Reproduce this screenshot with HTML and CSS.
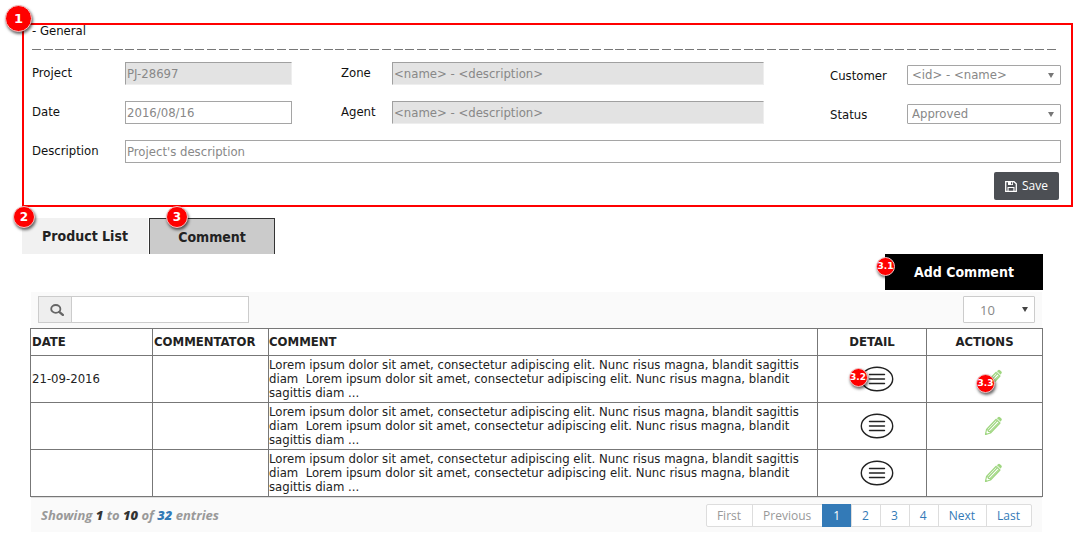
FILE: index.html
```html
<!DOCTYPE html>
<html lang="en">
<head>
<meta charset="utf-8">
<title>Project comments</title>
<link rel="stylesheet" href="styles.css">
</head>
<body>
<svg class="sprite" aria-hidden="true">
  <symbol id="pencil" viewBox="0 0 18 20">
    <g fill="none" stroke="#9fd680" stroke-width="1.2" stroke-linejoin="round">
      <path d="M1.5 18.5 2.5 13.5 12 3.5 16 7 6.5 17z"/>
      <path d="M2.5 13.5 4 14l.5 1.5 1.8.2.2 1.3M4.6 14 13 5.2M6 15.6 14.8 6.600"/>
    </g>
    <path fill="#9fd680" d="M12.500 2.800 14 1.200q1-.8 2 0l1.400 1.400q.8 1 0 1.900L16.200 6z"/>
    <path stroke="#fff" stroke-width=".8" d="m12.800 2.300 4 4"/>
    <path fill="#9fd680" d="M1 19l.6-2.600 1.800 1.900z"/>
  </symbol>
  <symbol id="lines" viewBox="0 0 34 26">
    <ellipse cx="17" cy="13" rx="15.700" ry="11.800" fill="#fff" stroke="#222" stroke-width="1.400"/>
    <path d="M9.500 8.500h15M9.500 13h15M9.500 17.500h15" stroke="#222" stroke-width="1.400" stroke-linecap="round"/>
  </symbol>
</svg>
<main class="page">
  <form class="general">
    <span class="badge badge-lg badge-general">1</span>
    <h2 class="general-title">- General</h2>
    <div class="divider"></div>
    <div class="fields">
      <label for="project">Project</label>
      <input class="field readonly" id="project" value="PJ-28697" readonly>
      <label class="label-mid" for="zone">Zone</label>
      <input class="field readonly" id="zone" value="&lt;name&gt; - &lt;description&gt;" readonly>
      <label class="label-end" for="customer">Customer</label>
      <span class="select"><select id="customer"><option>&lt;id&gt; - &lt;name&gt;</option></select></span>
      <label for="date">Date</label>
      <input class="field" id="date" value="2016/08/16">
      <label class="label-mid" for="agent">Agent</label>
      <input class="field readonly" id="agent" value="&lt;name&gt; - &lt;description&gt;" readonly>
      <label class="label-end" for="status">Status</label>
      <span class="select"><select id="status"><option>Approved</option></select></span>
      <label for="description">Description</label>
      <input class="field field-wide" id="description" value="Project's description">
    </div>
    <div class="form-actions">
      <button class="save" type="button">
        <svg width="12" height="11" viewBox="0 0 12 11" aria-hidden="true">
          <path d="M.7.700h8.300l2.300 2.200v7.400H.7z" fill="none" stroke="#fff" stroke-width="1.300"/>
          <path d="M3 .7h5v3.300H3zM2.500 6h7v4.300h-7z" fill="#fff"/>
          <path d="M6 1.300h1.200v2H6zM3.600 7h4.800v2.800H3.600z" fill="#4c4f54"/>
        </svg>
        Save
      </button>
    </div>
  </form>

  <section class="panel">
    <nav class="tabs">
      <button class="tab" type="button">Product List<span class="badge badge-md badge-products">2</span></button>
      <button class="tab tab-active" type="button">Comment<span class="badge badge-md badge-comment">3</span></button>
    </nav>
    <div class="add-row">
      <button class="add" type="button">Add Comment<span class="badge badge-sm badge-add">3.1</span></button>
    </div>
    <div class="listing">
      <div class="toolbar">
        <div class="search">
          <label class="search-icon" for="search" aria-label="Search">
            <svg width="14" height="12" viewBox="0 0 14 12" aria-hidden="true">
              <g fill="none" stroke="#666" stroke-width="1.800"><ellipse cx="5.800" cy="4.900" rx="4.600" ry="3.900"/><path d="m9.200 7.900 3.600 3" stroke-width="2.400" stroke-linecap="round"/></g>
            </svg>
          </label>
          <input class="search-input" id="search">
        </div>
        <span class="select select-count"><select aria-label="Rows per page"><option>10</option></select></span>
      </div>
      <table class="comments">
        <colgroup><col class="c-date"><col class="c-author"><col><col class="c-detail"><col class="c-actions"></colgroup>
        <thead>
          <tr><th>DATE</th><th>COMMENTATOR</th><th class="text">COMMENT</th><th class="mid">DETAIL</th><th class="mid">ACTIONS</th></tr>
        </thead>
        <tbody>
          <tr>
            <td>21-09-2016</td><td></td>
            <td class="text">Lorem ipsum dolor sit amet, consectetur adipiscing elit. Nunc risus magna, blandit sagittis diam&nbsp; Lorem ipsum dolor sit amet, consectetur adipiscing elit. Nunc risus magna, blandit sagittis diam ...</td>
            <td class="cell-detail"><button class="icon detail" type="button" aria-label="Detail"><svg width="34" height="26"><use href="#lines"/></svg><span class="badge badge-sm badge-detail">3.2</span></button></td>
            <td class="cell-edit"><button class="icon edit" type="button" aria-label="Edit"><svg width="18" height="20"><use href="#pencil"/></svg><span class="badge badge-sm badge-edit">3.3</span></button></td>
          </tr>
          <tr>
            <td></td><td></td>
            <td class="text">Lorem ipsum dolor sit amet, consectetur adipiscing elit. Nunc risus magna, blandit sagittis diam&nbsp; Lorem ipsum dolor sit amet, consectetur adipiscing elit. Nunc risus magna, blandit sagittis diam ...</td>
            <td class="cell-detail"><button class="icon detail" type="button" aria-label="Detail"><svg width="34" height="26"><use href="#lines"/></svg></button></td>
            <td class="cell-edit"><button class="icon edit" type="button" aria-label="Edit"><svg width="18" height="20"><use href="#pencil"/></svg></button></td>
          </tr>
          <tr>
            <td></td><td></td>
            <td class="text">Lorem ipsum dolor sit amet, consectetur adipiscing elit. Nunc risus magna, blandit sagittis diam&nbsp; Lorem ipsum dolor sit amet, consectetur adipiscing elit. Nunc risus magna, blandit sagittis diam ...</td>
            <td class="cell-detail"><button class="icon detail" type="button" aria-label="Detail"><svg width="34" height="26"><use href="#lines"/></svg></button></td>
            <td class="cell-edit"><button class="icon edit" type="button" aria-label="Edit"><svg width="18" height="20"><use href="#pencil"/></svg></button></td>
          </tr>
        </tbody>
      </table>
      <div class="footer">
        <p class="summary">Showing <b>1</b> to <b>10</b> of <b class="total">32</b> entries</p>
        <nav class="pages">
          <a class="off" href="#">First</a><a class="off" href="#">Previous</a><a class="current" href="#">1</a><a href="#">2</a><a href="#">3</a><a href="#">4</a><a href="#">Next</a><a href="#">Last</a>
        </nav>
      </div>
    </div>
  </section>
</main>
</body>
</html>
```
FILE: styles.css
```css
* { box-sizing: border-box; }

body {
  margin: 0;
  background: #fff;
  color: #222;
  font: 13px/14px "DejaVu Sans Condensed", "Noto Sans", sans-serif;
}

button, input, select { font: inherit; color: inherit; margin: 0; }
button { cursor: pointer; }
.sprite { position: absolute; width: 0; height: 0; }

.page { padding: 23px 6px 0 22px; }

/* numbered markers */
.badge {
  position: absolute;
  display: flex;
  align-items: center;
  justify-content: center;
  border: 1px solid #f3c4c4;
  border-radius: 50%;
  background: #f00;
  box-shadow: 1px 2px 3px rgba(0, 0, 0, .6);
  color: #fff;
  font-family: "DejaVu Sans", sans-serif;
  font-weight: bold;
  line-height: 1;
}
.badge-lg { width: 27px; height: 27px; font-size: 13px; }
.badge-md { width: 22px; height: 22px; font-size: 12px; }
.badge-sm { width: 19px; height: 19px; font-size: 9px; }
.badge-general { left: -19px; top: -20px; }
.badge-products { left: -9px; top: -12px; }
.badge-comment { left: 16px; top: -13px; }
.badge-add { left: -9px; top: 3px; }
.badge-detail { left: -11px; top: 2px; }
.badge-edit { left: -8px; top: 5px; }

/* general form */
.general {
  position: relative;
  padding: 0 10px 5px 8px;
  border: 2px solid #f00;
  color: #111;
}
.general-title { margin: 0; font-size: 13px; font-weight: normal; line-height: 12px; }
.divider {
  height: 1px;
  margin: 12px 2px 12px 0;
  background: repeating-linear-gradient(90deg, #777 0 9px, #fff 9px 12px, #777 12px 21px, #fff 21px 23px, #777 23px 32px, #fff 32px 35px);
}
.fields {
  display: grid;
  grid-template-columns: 93px 167fr 100px 372fr 143px 154fr;
  grid-auto-rows: 23px;
  row-gap: 16px;
  align-items: center;
}
.fields label { padding-bottom: 2px; }
.fields .label-mid { padding-left: 49px; }
.fields .label-end { padding: 4px 0 0 66px; }
.field {
  width: 100%;
  height: 23px;
  padding: 0 1px;
  border: 1px solid #a5a5a5;
  background: #fff;
  color: #888;
}
.readonly { background: #e3e3e3; border-color: #a0a0a0 #eee #eee #a0a0a0; }
.field-wide { grid-column: 2 / -1; }
.select { position: relative; display: block; align-self: end; color: #888; }
.select select {
  display: block;
  appearance: none;
  width: 100%;
  height: 20px;
  padding: 0 20px 0 4px;
  border: 1px solid #a5a5a5;
  border-radius: 1px;
  background: #fff;
}
.select::after {
  content: "";
  position: absolute;
  right: 7px;
  top: 8px;
  border: 3px solid transparent;
  border-top: 5px solid #777;
  border-bottom: 0;
  pointer-events: none;
}
.form-actions { display: flex; justify-content: flex-end; padding: 9px 2px 0 0; }
.save {
  display: flex;
  align-items: center;
  gap: 5px;
  height: 28px;
  padding: 0 11px;
  border: 0;
  border-radius: 2px;
  background: #4c4f54;
  color: #fff;
  font-family: "Open Sans", sans-serif;
  font-size: 12px;
}

/* tabs */
.panel { margin: 11px 30px 0 0; }
.tabs { display: flex; gap: 1px; }
.tab, .add {
  position: relative;
  height: 36px;
  border: 0;
  font-size: 14px;
  font-weight: bold;
}
.tab { width: 126px; padding: 0; background: #f1f1f1; color: #222; }
.tab-active { background: #cbcbcb; border: 1px solid #333; border-bottom: 0; }
.add-row { display: flex; justify-content: flex-end; }
.add { width: 158px; background: #000; color: #fff; }

/* comment list */
.listing { padding-left: 8px; }
.toolbar {
  display: flex;
  justify-content: space-between;
  margin: 2px 1px 0;
  padding: 4px 7px 5px;
  background: #fafafa;
}
.search { display: flex; width: 211px; height: 27px; border: 1px solid #ccc; }
.search-icon {
  display: flex;
  align-items: center;
  justify-content: center;
  width: 33px;
  padding-left: 3px;
  border-right: 1px solid #ccc;
  background: #eee;
}
.search-input { flex: 1; min-width: 0; padding: 0 6px; border: 0; background: #fff; }
.select-count { width: 72px; font: 13px/16px "Open Sans", sans-serif; }
.select-count select { height: 27px; padding-left: 16px; border-color: #ccc; }
.select-count::after { top: 11px; border-top-color: #444; }

.comments { width: 100%; border-collapse: collapse; table-layout: fixed; }
.comments th, .comments td { height: 47px; padding: 2px 1px; border: 1px solid #777; text-align: left; }
.comments th { height: 27px; }
.comments .text { padding-left: 0; }
.comments .mid { text-align: center; }
.comments .cell-detail { padding-left: 10px; }
.comments .cell-edit { padding-left: 18px; }
.c-date { width: 122px; }
.c-author { width: 116px; }
.c-detail { width: 109px; }
.c-actions { width: 116px; }
.icon { position: relative; display: block; margin: 0 auto; padding: 0; border: 0; background: none; }
.icon svg { display: block; }
.detail { width: 34px; }
.edit { width: 18px; }

.footer {
  display: flex;
  align-items: center;
  justify-content: space-between;
  height: 35px;
  margin: 0 1px;
  padding: 0 10px;
  border-top: 1px solid #ddd;
  background: #fafafa;
  font: 12px/15px "Open Sans", sans-serif;
}
.summary { margin: 0; color: #999; font-size: 13px; font-weight: bold; font-style: italic; }
.summary b { color: #333; }
.summary .total { color: #337ab7; }
.pages { display: flex; border: 1px solid #ddd; border-radius: 2px; background: #fff; }
.pages a { padding: 3px 11px 3px 10px; border-left: 1px solid #ddd; color: #337ab7; text-decoration: none; }
.pages a:first-child { border-left: 0; }
.pages .off { color: #999; }
.pages .current { margin: -1px 0; padding: 4px 11px; border: 0; background: #337ab7; color: #fff; }
```
